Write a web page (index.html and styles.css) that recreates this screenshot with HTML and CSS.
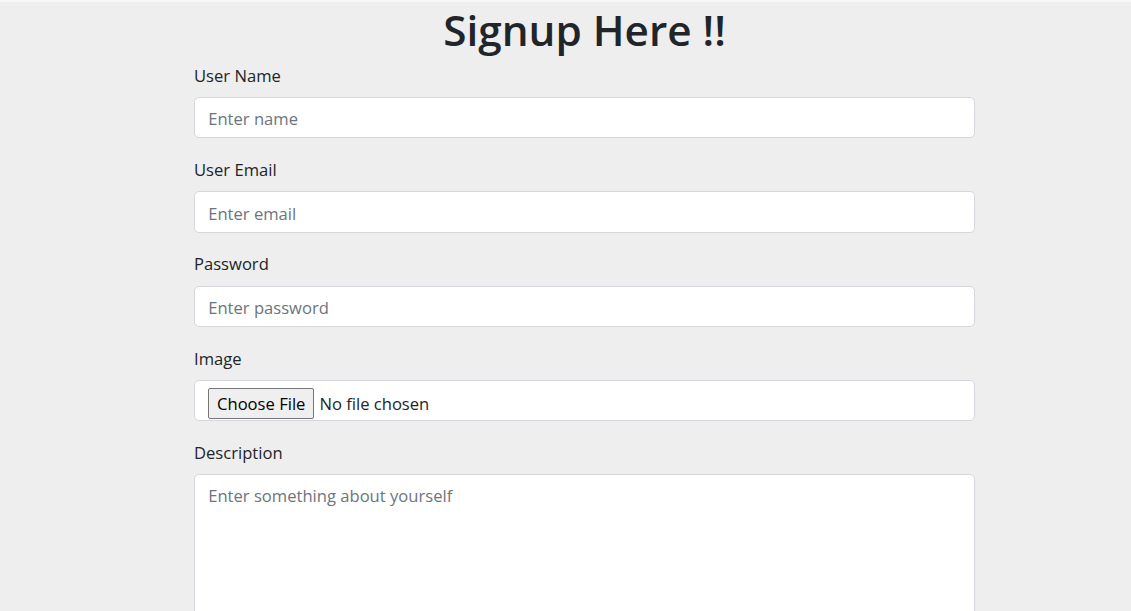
FILE: index.html
```html
<!DOCTYPE html>
<html lang="en">
<head>
<meta charset="utf-8">
<title>Signup</title>
<link rel="stylesheet" href="styles.css">
</head>
<body>
<div class="top-strip"></div>
<main class="page">
  <h1 class="title">Signup Here !!</h1>
  <form class="form">
    <div class="group">
      <label class="label" for="name">User Name</label>
      <input class="control" id="name" type="text" placeholder="Enter name">
    </div>
    <div class="group">
      <label class="label" for="email">User Email</label>
      <input class="control" id="email" type="email" placeholder="Enter email">
    </div>
    <div class="group">
      <label class="label" for="password">Password</label>
      <input class="control" id="password" type="password" placeholder="Enter password">
    </div>
    <div class="group">
      <label class="label">Image</label>
      <div class="control file">
        <button type="button" class="file-btn">Choose File</button>
        <span class="file-text">No file chosen</span>
      </div>
    </div>
    <div class="group">
      <label class="label" for="desc">Description</label>
      <textarea class="control area" id="desc" placeholder="Enter something about yourself"></textarea>
    </div>
  </form>
</main>
</body>
</html>
```
FILE: styles.css
```css
* { box-sizing: border-box; }
html, body {
  margin: 0;
  padding: 0;
  background: #eeeeee;
  overflow: hidden;
}
body {
  font-family: "Open Sans", "Noto Sans", sans-serif;
  font-size: 16.6px;
  line-height: 1.5;
  color: #212529;
}
.top-strip {
  height: 2px;
  background: #f7f7f7;
}
.page {
  width: 781px;
  margin-left: 194px;
}
.title {
  margin: 0;
  height: 59.8px;
  padding-top: 2.5px;
  font-size: 42.3px;
  font-weight: 600;
  line-height: 50px;
  text-align: center;
  color: #212529;
}
.form {
  display: flex;
  flex-direction: column;
}
.group {
  display: flex;
  flex-direction: column;
  margin-bottom: 17.6px;
}
.label {
  display: block;
  height: 35.2px;
  padding-top: 1px;
  line-height: 26.4px;
}
.control {
  display: block;
  width: 100%;
  height: 41.5px;
  padding: 7.8px 13.2px 5.4px;
  font-family: inherit;
  font-size: 16.6px;
  line-height: 26.4px;
  color: #495057;
  background: #ffffff;
  border: 1px solid #d4d8dd;
  border-radius: 5px;
  outline: none;
}
.control::placeholder {
  color: #6c757d;
  opacity: 1;
}
.file {
  display: flex;
  align-items: flex-start;
  padding: 7px 13px 0;
  gap: 5px;
}
.file-btn {
  height: 31px;
  padding: 0 8px;
  font-family: inherit;
  font-size: 16.6px;
  color: #000;
  background: #efefef;
  border: 1px solid #767676;
  border-radius: 2px;
}
.file-text {
  line-height: 31px;
  color: #212529;
}
.area {
  height: 200px;
  resize: none;
}
```
